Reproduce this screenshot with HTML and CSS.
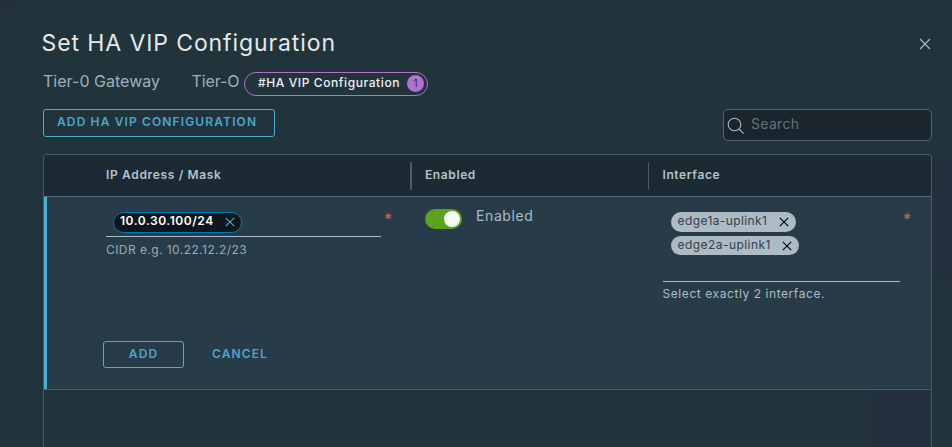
FILE: index.html
```html
<!DOCTYPE html>
<html lang="en">
<head>
<meta charset="utf-8">
<title>Set HA VIP Configuration</title>
<link rel="stylesheet" href="styles.css">
</head>
<body>
<main class="dialog">
  <header class="dialog-header">
    <h1 class="title">Set HA VIP Configuration</h1>
    <button class="close" aria-label="Close"><svg width="12" height="12" viewBox="0 0 12 12"><path d="M1 1l10 10M11 1L1 11"/></svg></button>
  </header>
  <div class="context">
    <span class="gateway-label">Tier-0 Gateway</span>
    <span class="gateway-name">Tier-O</span>
    <span class="tag"><span class="tag-text">#HA VIP Configuration</span><span class="count">1</span></span>
  </div>
  <div class="toolbar">
    <button class="btn btn-create"><span>ADD HA VIP CONFIGURATION</span></button>
    <label class="search">
      <svg width="18" height="18" viewBox="0 0 18 18"><circle cx="7.5" cy="7.5" r="6.3"/><path d="M12 12l4.7 4.7"/></svg>
      <input type="text" placeholder="Search" aria-label="Search">
    </label>
  </div>
  <section class="grid">
    <div class="grid-head">
      <div class="cell col-ip"><span class="h-ip">IP Address / Mask</span></div>
      <div class="cell col-enabled"><span class="h-enabled">Enabled</span></div>
      <div class="cell col-interface"><span class="h-interface">Interface</span></div>
    </div>
    <div class="grid-row">
      <div class="fields">
        <div class="cell col-ip">
          <div class="control ip-control">
            <span class="chip chip-dark"><span class="chip-text">10.0.30.100/24</span><svg width="10" height="10" viewBox="0 0 10 10"><path d="M.8.8l8.4 8.4M9.2.8L.8 9.2"/></svg></span>
          </div>
          <span class="required">*</span>
          <div class="hint hint-ip">CIDR e.g. 10.22.12.2/23</div>
        </div>
        <div class="cell col-enabled">
          <div class="switch-line"><span class="switch"><span class="knob"></span></span><span class="switch-text">Enabled</span></div>
        </div>
        <div class="cell col-interface">
          <div class="control interface-control">
            <span class="chip chip-light"><span class="chip-text">edge1a-uplink1</span><svg width="10" height="10" viewBox="0 0 10 10"><path d="M.8.8l8.4 8.4M9.2.8L.8 9.2"/></svg></span>
            <span class="chip chip-light chip-second"><span class="chip-text">edge2a-uplink1</span><svg width="10" height="10" viewBox="0 0 10 10"><path d="M.8.8l8.4 8.4M9.2.8L.8 9.2"/></svg></span>
          </div>
          <span class="required">*</span>
          <div class="hint hint-interface">Select exactly 2 interface.</div>
        </div>
      </div>
      <div class="actions">
        <button class="btn btn-add"><span>ADD</span></button>
        <button class="btn-link"><span>CANCEL</span></button>
      </div>
    </div>
    <div class="grid-empty"></div>
  </section>
</main>
</body>
</html>
```
FILE: styles.css
```css
* { box-sizing: border-box; }
html, body { height: 100%; }
body {
  margin: 0;
  overflow: hidden;
  background:
    linear-gradient(#25303f, #25303f) 0 0 / 18px 10px no-repeat,
    linear-gradient(#25303f, #25303f) right 154px / 20px 128px no-repeat,
    #22343b;
  color: #adbbc4;
  font-family: Inter, "Liberation Sans", sans-serif;
  font-size: 12px;
}
svg { display: block; flex: none; fill: none; stroke: currentColor; stroke-width: 1.1; }
button { padding: 0; border: 0; background: none; font: inherit; color: inherit; }
.dialog { display: flex; flex-direction: column; height: 447px; padding: 28px 21px 0 43px; }
.dialog-header { display: flex; justify-content: space-between; height: 32px; }
.title { margin: 0 0 0 -1.5px; color: #e4e8eb; font-size: 23px; font-weight: 400; line-height: 30px; letter-spacing: .9px; white-space: nowrap; }
.close { width: 12px; height: 12px; margin-top: 10px; color: #adbbc4; }
.context { display: flex; height: 49px; padding-top: 12px; white-space: nowrap; }
.gateway-label, .gateway-name { margin-top: -1px; color: #9fafb8; font-size: 16px; font-weight: 400; line-height: 20px; }
.gateway-label { width: 148.5px; letter-spacing: .02px; }
.gateway-name { width: 52.5px; letter-spacing: -.1px; }
.tag { display: flex; align-items: center; justify-content: space-between; width: 184px; height: 24px; padding: 0 3px 2px 13px; border: 1px solid #b46fd0; border-radius: 12px; color: #eef1f3; }
.tag-text { margin-top: -2px; font-size: 12px; font-weight: 500; letter-spacing: .6px; }
.count { width: 17px; height: 17px; margin-top: 1px; border-radius: 50%; background: #b270cf; color: #303449; font-size: 11px; line-height: 17px; text-align: center; }
.toolbar { display: flex; justify-content: space-between; height: 45px; }
.btn { border: 1px solid #49afd9; border-radius: 3px; color: #49a6d0; font-weight: 500; white-space: nowrap; }
.btn-create { display: flex; width: 232px; height: 28px; padding-left: 13px; font-size: 12px; font-weight: 600; line-height: 24px; letter-spacing: 1.13px; }
.search { display: flex; width: 209px; height: 32px; margin-right: -1px; padding: 7px 3px; border: 1px solid #53656f; border-radius: 5px; background: #1a252d; }
.search input { width: 170px; height: 16px; margin: -2px 0 0 6px; padding: 0; border: 0; outline: 0; background: transparent; color: #adbbc4; font: 400 14px Inter, sans-serif; letter-spacing: .3px; }
.search input::placeholder { color: #65717b; opacity: 1; }
.grid { flex: 1; display: flex; flex-direction: column; width: 889px; border: 1px solid #495c66; border-bottom: 0; border-radius: 4px 4px 0 0; overflow: hidden; }
.grid-head { display: flex; height: 42px; border-bottom: 1px solid #566b75; background: #1c2a33; color: #b4c3cc; font-weight: 600; }
.grid-head .cell { line-height: 39px; letter-spacing: .6px; }
.grid-head .h-ip { letter-spacing: .66px; }
.cell { position: relative; flex: none; }
.col-ip { width: 366px; padding-left: 62px; }
.col-enabled { width: 238px; padding-left: 15px; }
.col-interface { width: 283px; padding-left: 14.5px; }
.grid-head .col-enabled::before, .grid-head .col-interface::before { content: ""; position: absolute; left: 0; top: 7px; width: 2px; height: 28px; background: #4a5e69; }
.grid-head .col-interface::before { width: 1px; }
.grid-row { height: 193px; border-bottom: 1px solid #495c66; background: #273b48; box-shadow: inset 3px 0 #49afd9; }
.fields { display: flex; height: 144px; }
.control { display: flex; border-bottom: 1px solid #adbbc4; }
.ip-control { width: 275px; height: 40px; padding: 15px 0 0 7px; }
.interface-control { flex-direction: column; gap: 4px; width: 237.5px; height: 85px; padding: 15px 0 0 8px; }
.required { position: absolute; top: 12px; color: #e0604f; font-size: 16px; line-height: 20px; }
.col-ip .required { left: 340px; }
.col-interface .required { left: 255px; }
.hint { font-size: 12px; line-height: 24px; white-space: nowrap; }
.hint-ip { color: #9aaab4; letter-spacing: .44px; line-height: 26px; }
.hint-interface { letter-spacing: .57px; }
.chip { display: flex; align-items: center; justify-content: space-between; width: 125px; height: 20px; padding: 0 7px 0 7px; border-radius: 10px; white-space: nowrap; }
.chip-text { line-height: 16px; padding-bottom: 3px; letter-spacing: .4px; }
.chip-dark { width: 129px; height: 21px; padding: 0 6px; border: 1px solid #0079b8; border-radius: 11px; background: #0f171c; color: #49afd9; }
.chip-dark svg { margin-top: -1px; }
.chip-dark .chip-text { color: #fff; font-weight: 600; letter-spacing: .55px; }
.chip-light { background: #adbbc4; color: #34414a; }
.chip-light svg { color: #000; }
.chip-second { width: 128px; height: 19px; }
.chip-second .chip-text { padding-bottom: 1px; letter-spacing: .45px; }
.switch-line { display: flex; padding-top: 12px; }
.switch { display: flex; justify-content: flex-end; width: 37px; height: 20px; padding: 2px; border-radius: 10px; background: #5ba31f; }
.knob { width: 16px; height: 16px; border-radius: 50%; background: #fafafa; }
.switch-text { margin: -3px 0 0 14px; font-size: 14px; font-weight: 400; line-height: 20px; letter-spacing: .6px; }
.actions { display: flex; padding-left: 59px; }
.btn-add { width: 81px; height: 27px; border-radius: 3px; font-weight: 600; line-height: 22px; letter-spacing: 1.1px; padding-bottom: 2px; }
.btn-link { margin-left: 28px; height: 25px; color: #49a6d0; font-weight: 600; line-height: 24px; letter-spacing: 1.1px; }
.grid-empty { flex: 1; background: linear-gradient(#25303f, #25303f) right top / 61px 100% no-repeat; }
```
